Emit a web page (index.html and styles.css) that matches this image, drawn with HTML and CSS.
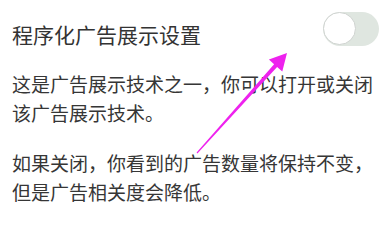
FILE: index.html
```html
<!DOCTYPE html>
<html lang="zh-CN">
<head>
    <meta charset="UTF-8">
    <meta name="viewport" content="width=device-width, initial-scale=1.0">
    <title>程序化广告展示设置</title>
    <link rel="stylesheet" href="styles.css">
</head>
<body>
<div class="setting">
    <div class="setting-row">
        <span class="setting-title">程序化广告展示设置</span>
        <span class="switch"><span class="switch-knob"></span></span>
    </div>
    <p class="setting-desc">这是广告展示技术之一，你可以打开或关闭该广告展示技术。</p>
    <p class="setting-desc">如果关闭，你看到的广告数量将保持不变，但是广告相关度会降低。</p>
</div>

<svg class="pointer" width="388" height="233" viewBox="0 0 388 233">
    <polygon fill="#ee22ee" points="196.6,152.6 274.1,64.3 268.9,59.6 287,53 282.3,71.6 277.1,67 197.4,153.6"/>
</svg>
</body>
</html>
```

FILE: styles.css
```css
body, html {
    margin: 0;
    padding: 0;
    height: 100%;
    overflow: hidden;
    background-color: #ffffff;
    font-family: "Noto Sans CJK SC", "Noto Sans", sans-serif;
}
.setting {
    padding: 12px 9px 0 12px;
}
.setting-row {
    display: flex;
    justify-content: space-between;
    align-items: flex-start;
}
.setting-title {
    margin-top: 12px;
    font-size: 21px;
    line-height: 21px;
    color: #333333;
}
.switch {
    position: relative;
    width: 56px;
    height: 34px;
    border-radius: 17px;
    background-color: #dfe6e0;
}
.switch-knob {
    position: absolute;
    left: 0;
    top: 0;
    width: 31px;
    height: 31px;
    border-radius: 50%;
    background-color: #ffffff;
    border: 1.5px solid #cfd3d0;
}
.setting-desc {
    margin: 0 0 21px 0;
    font-size: 19px;
    line-height: 29px;
    color: #363636;
}
.setting-row + .setting-desc {
    margin-top: 23px;
}
.pointer {
    position: absolute;
    left: 0;
    top: 0;
}
```
